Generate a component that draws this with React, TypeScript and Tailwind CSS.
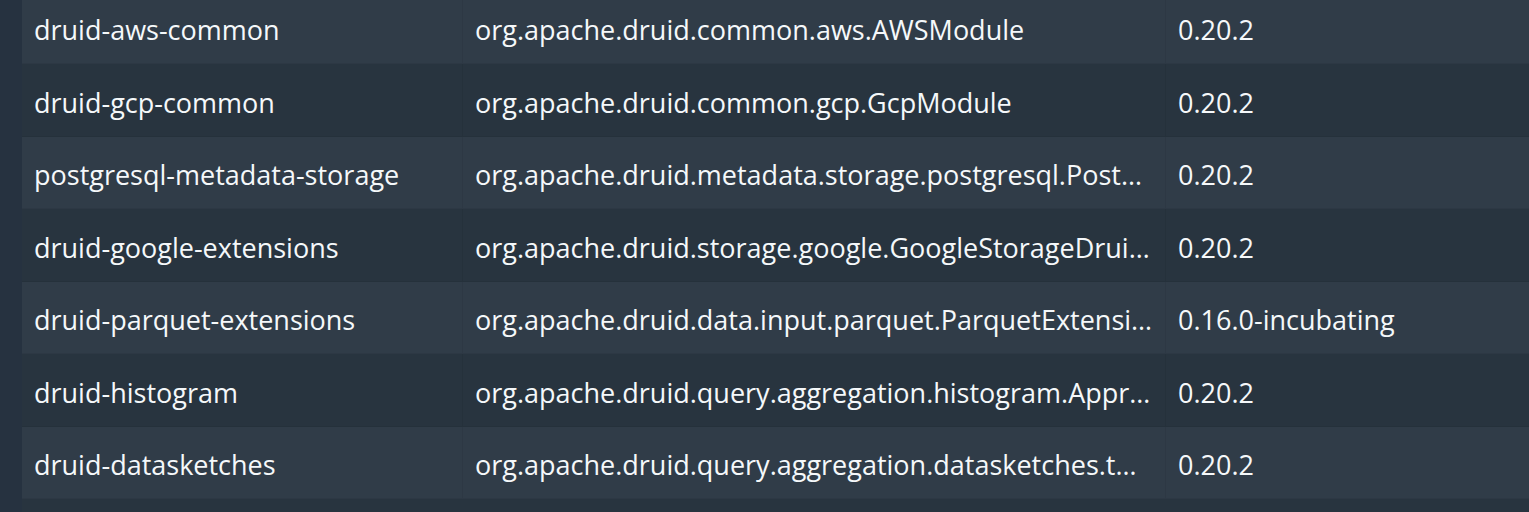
import React from "react";

const rows = [
  ["druid-aws-common", "org.apache.druid.common.aws.AWSModule", "0.20.2"],
  ["druid-gcp-common", "org.apache.druid.common.gcp.GcpModule", "0.20.2"],
  ["postgresql-metadata-storage", "org.apache.druid.metadata.storage.postgresql.PostgreSQLMetadataStorageModule", "0.20.2"],
  ["druid-google-extensions", "org.apache.druid.storage.google.GoogleStorageDruidModule", "0.20.2"],
  ["druid-parquet-extensions", "org.apache.druid.data.input.parquet.ParquetExtensionsModule", "0.16.0-incubating"],
  ["druid-histogram", "org.apache.druid.query.aggregation.histogram.ApproximateHistogramDruidModule", "0.20.2"],
  ["druid-datasketches", "org.apache.druid.query.aggregation.datasketches.theta.SketchModule", "0.20.2"],
];

const App = () => {
  return (
    <div
      className="h-[512px] w-full overflow-hidden bg-[#263240] pl-[22px] text-[27px] text-[#f5f8fa]"
      style={{ fontFamily: '"Open Sans", "Noto Sans", sans-serif' }}
    >
      <div className="-mt-[8.5px] bg-[#28343f]">
        {rows.map((r, i) => (
          <div
            key={r[0]}
            className={`grid h-[72.5px] grid-cols-[440px_703px_1fr] items-stretch border-b border-black/5 ${i % 2 === 0 ? "bg-[#303c48]" : "bg-[#28343f]"}`}
          >
            <div className="flex min-w-0 items-center px-3 pt-[6px]">
              <span className="truncate">{r[0]}</span>
            </div>
            <div className="flex min-w-0 items-center border-l border-black/5 px-3 pt-[6px]">
              <span className="truncate">{r[1]}</span>
            </div>
            <div className="flex min-w-0 items-center border-l border-black/5 px-3 pt-[6px]">
              <span className="truncate">{r[2]}</span>
            </div>
          </div>
        ))}
        <div className="h-[20px]" />
      </div>
    </div>
  );
};

export default App;
